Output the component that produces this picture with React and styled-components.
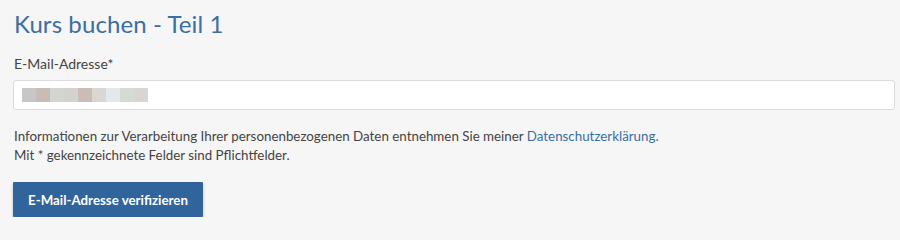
import React from 'react';
import styled, { createGlobalStyle } from 'styled-components';

const GlobalStyle = createGlobalStyle`
    html, body {
        margin: 0;
        padding: 0;
        background-color: #f6f6f6;
    }
    body {
        font-family: Lato, "Open Sans", sans-serif;
        color: #444;
    }
`;

const Page = styled.div`
    padding: 9px 5px 0 13px;
    width: 882px;
`;

const Title = styled.h2`
    margin: 0 0 0 1px;
    font-size: 24px;
    font-weight: 400;
    line-height: 30px;
    letter-spacing: 0.1px;
    color: #3a6ea5;
`;

const Label = styled.label`
    display: block;
    margin: 16px 0 0 1px;
    font-size: 14px;
    line-height: 18px;
    color: #444;
`;

const Field = styled.div`
    display: flex;
    align-items: center;
    margin-top: 7px;
    height: 28px;
    padding: 0 8px;
    background: #fff;
    border: 1px solid #dcdcdc;
    border-radius: 3px;
`;

const Blur = styled.span`
    width: 14px;
    height: 14px;
    background: ${p => p.$c};
`;

const Info = styled.p`
    margin: 17px 0 0 1px;
    font-size: 13.35px;
    line-height: 19px;
    color: #444;
`;

const Link = styled.a`
    color: #3a6ea5;
    text-decoration: none;
`;

const Button = styled.button`
    display: block;
    margin-top: 17px;
    width: 190px;
    height: 35px;
    padding: 0;
    border: none;
    border-radius: 1px;
    background: #31649a;
    color: #fff;
    font-family: Lato, sans-serif;
    font-weight: 700;
    font-size: 13.3px;
    box-shadow: 0 2px 3px rgba(0, 0, 0, 0.25);
    cursor: pointer;
`;

const blurColors = ['#c8c6c6', '#c9bbb5', '#d4d4d0', '#d2d3d0', '#cbbcb5', '#dcd6d2', '#e2e8ee', '#d5dbd3', '#d8d5d3'];

export default function App() {
    return (
        <>
            <GlobalStyle />
            <Page>
                <Title>Kurs buchen - Teil 1</Title>
                <Label>E-Mail-Adresse*</Label>
                <Field>
                    {blurColors.map((c, i) => <Blur key={i} $c={c} />)}
                </Field>
                <Info>
                    Informationen zur Verarbeitung Ihrer personenbezogenen Daten entnehmen Sie meiner <Link href="#">Datenschutzerklärung.</Link>
                    <br />
                    Mit * gekennzeichnete Felder sind Pflichtfelder.
                </Info>
                <Button>E-Mail-Adresse verifizieren</Button>
            </Page>
        </>
    );
}
